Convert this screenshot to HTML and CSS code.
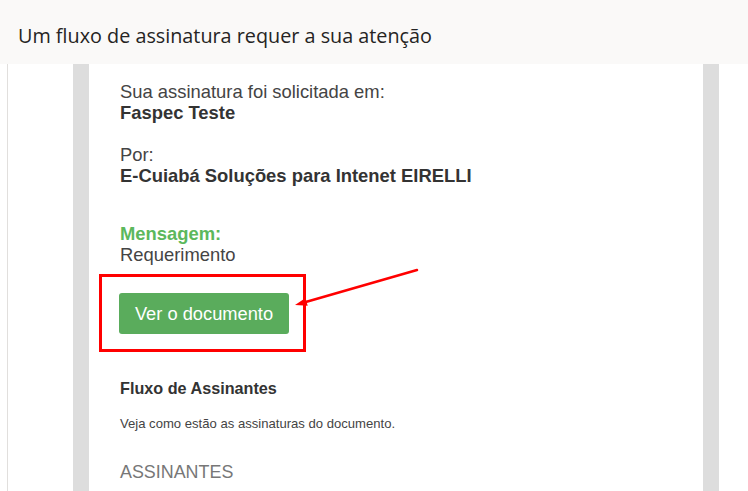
FILE: index.html
```html
<!DOCTYPE html>
<html lang="pt">
<head>
<meta charset="utf-8">
<link rel="stylesheet" href="styles.css">
</head>
<body>
<header class="subject">Um fluxo de assinatura requer a sua atenção</header>
<div class="reading">
  <div class="email">
    <p class="block">Sua assinatura foi solicitada em:<br><b class="strong">Faspec Teste</b></p>
    <p class="block">Por:<br><b class="strong">E-Cuiabá Soluções para Intenet EIRELLI</b></p>
    <p class="block msg"><b class="green">Mensagem:</b><br>Requerimento</p>
    <div class="cta">
      <div class="highlight">
        <a class="btn">Ver o documento</a>
      </div>
      <svg class="arrow" width="140" height="50" viewBox="0 0 140 50">
        <line x1="124" y1="4" x2="13.6" y2="35.8" stroke="#ff0000" stroke-width="2.5" stroke-linecap="round"/>
        <polygon points="2,39 14.7,39.7 12.5,32" fill="#ff0000"/>
      </svg>
    </div>
    <h3 class="flow">Fluxo de Assinantes</h3>
    <p class="note">Veja como estão as assinaturas do documento.</p>
    <div class="signers">ASSINANTES</div>
  </div>
</div>
</body>
</html>
```
FILE: styles.css
```css
html, body {
  margin: 0;
  padding: 0;
  background: #ffffff;
  height: 491px;
  overflow: hidden;
}
body {
  display: flex;
  flex-direction: column;
}
.subject {
  height: 64px;
  box-sizing: border-box;
  background: #faf9f8;
  padding: 22px 0 0 18px;
  font-family: "Open Sans", sans-serif;
  font-size: 19.8px;
  color: #252423;
  line-height: 28px;
}
.reading {
  flex: 1;
  margin-left: 7px;
  border-left: 1px solid #e1dfdd;
  padding-left: 65px;
  display: flex;
}
.email {
  width: 552px;
  border-left: 16px solid #dddddd;
  border-right: 16px solid #dddddd;
  padding: 17px 31px 0 31px;
  font-family: "Liberation Sans", Arial, sans-serif;
  font-size: 18.4px;
  line-height: 21px;
  color: #444444;
}
.strong {
  color: #333333;
}
.block {
  margin: 0 0 21px 0;
}
.block + .msg {
  margin-top: 37px;
  margin-bottom: 9px;
}
.green {
  color: #5cb85c;
}
.cta {
  position: relative;
}
.highlight {
  width: 184px;
  height: 72px;
  border: 3px solid #ff0000;
  margin-left: -21px;
  display: flex;
  align-items: center;
  padding-left: 17px;
  box-sizing: content-box;
}
.btn {
  display: inline-block;
  width: 170px;
  height: 41px;
  line-height: 41px;
  text-align: center;
  background: #5aac5c;
  color: #ffffff;
  border-radius: 3px;
  font-size: 18.3px;
}
.arrow {
  position: absolute;
  left: 173px;
  top: -8px;
}
.flow {
  margin: 26px 0 0 0;
  font-size: 16.2px;
  font-weight: bold;
  line-height: 20px;
  color: #333333;
}
.note {
  margin: 18px 0 0 0;
  font-size: 13.1px;
  line-height: 16px;
  color: #444444;
}
.signers {
  margin-top: 29px;
  font-size: 17.9px;
  line-height: 22px;
  color: #777777;
}
```
